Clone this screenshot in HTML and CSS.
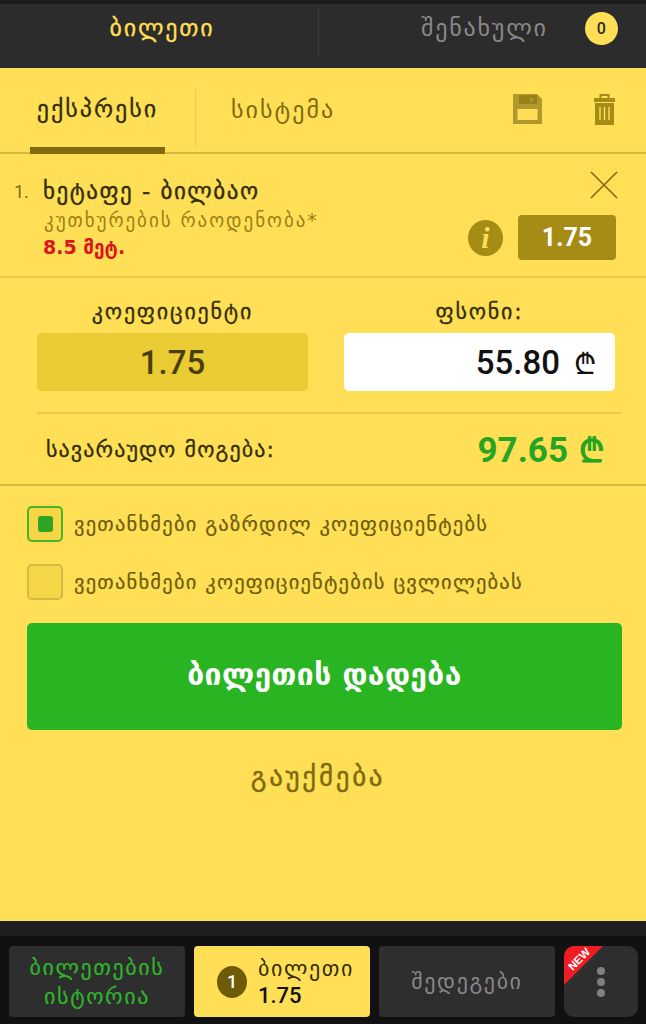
FILE: index.html
```html
<!DOCTYPE html>
<html lang="ka">
<head>
    <meta charset="UTF-8">
    <meta name="viewport" content="width=device-width, initial-scale=1.0">
    <title>ბილეთი</title>
    <link rel="stylesheet" href="styles.css">
</head>
<body>
    <div class="page">
        <!-- top tabs -->
        <header class="top-bar">
            <div class="top-tab active">ბილეთი</div>
            <div class="top-tab saved">
                <span>შენახული</span>
                <span class="saved-count">0</span>
            </div>
        </header>

        <main class="slip">
            <div class="type-row">
                <div class="type-tab active">ექსპრესი</div>
                <div class="type-tab second">სისტემა</div>
                <div class="type-icons">
                    <svg width="29" height="30" viewBox="0 0 29 30">
                        <path fill-rule="evenodd" d="M0 0H24L29 5V30H0ZM4.5 15V26H24.5V15Z" fill="#b1982f"/>
                        <path fill-rule="evenodd" d="M6 1H24V10H6ZM17 4V7H20V4Z" fill="#9c8214"/>
                    </svg>
                    <svg width="21" height="31" viewBox="0 0 21 31">
                        <path d="M6.5 4V1H14.5V4" fill="none" stroke="#a68b15" stroke-width="2"/>
                        <path d="M0 4H21V8H0Z" fill="#a68b15"/>
                        <path d="M1 9H20V31H1Z" fill="#a68b15"/>
                        <path d="M6 13V26M10.5 13V26M15 13V26" stroke="#ffdf55" stroke-width="1.4"/>
                    </svg>
                </div>
            </div>

            <div class="bet">
                <div class="bet-info">
                    <div class="bet-title"><span class="bet-num">1.</span><span>ხეტაფე - ბილბაო</span></div>
                    <div class="bet-market">კუთხურების რაოდენობა*</div>
                    <div class="bet-pick">8.5 მეტ.</div>
                </div>
                <div class="bet-side">
                    <svg class="close-x" width="30" height="30" viewBox="0 0 30 30">
                        <path d="M2 2L28 28M28 2L2 28" stroke="#80690f" stroke-width="1.6" fill="none"/>
                    </svg>
                    <div class="bet-odds-row">
                        <span class="info-icon">i</span>
                        <span class="odds-box">1.75</span>
                    </div>
                </div>
            </div>

            <div class="stake">
                <div class="stake-cols">
                    <div class="stake-col">
                        <div class="stake-label">კოეფიციენტი</div>
                        <div class="field field-odds">1.75</div>
                    </div>
                    <div class="stake-col">
                        <div class="stake-label">ფსონი:</div>
                        <div class="field field-amount">55.80<span class="lari">₾</span></div>
                    </div>
                </div>
                <div class="win-row">
                    <span class="win-label">სავარაუდო მოგება:</span>
                    <span class="win-value">97.65<span class="win-lari">₾</span></span>
                </div>
            </div>

            <div class="actions">
                <div class="check-row">
                    <span class="check checked"><span class="check-dot"></span></span>
                    <span>ვეთანხმები გაზრდილ კოეფიციენტებს</span>
                </div>
                <div class="check-row">
                    <span class="check"></span>
                    <span>ვეთანხმები კოეფიციენტების ცვლილებას</span>
                </div>
                <button class="place-btn">ბილეთის დადება</button>
                <div class="cancel">გაუქმება</div>
            </div>
        </main>

        <!-- bottom menu -->
        <footer class="bottom">
            <div class="bottom-strip"></div>
            <nav class="bottom-nav">
                <div class="nav-btn history">ბილეთების<br>ისტორია</div>
                <div class="nav-btn ticket">
                    <span class="ticket-count">1</span>
                    <span class="ticket-text">ბილეთი<br><b>1.75</b></span>
                </div>
                <div class="nav-btn results">შედეგები</div>
                <div class="nav-btn more">
                    <span class="new-flag"><span>NEW</span></span>
                    <span class="dots"><i></i><i></i><i></i></span>
                </div>
            </nav>
        </footer>
    </div>
</body>
</html>
```

FILE: styles.css
```css
* {
    box-sizing: border-box;
}

html, body {
    margin: 0;
    padding: 0;
}

body {
    font-family: 'DejaVu Sans', sans-serif;
    background-color: #ffdf55;
}

.page {
    display: flex;
    flex-direction: column;
    width: 646px;
    height: 1024px;
    overflow: hidden;
}

/* top tabs */
.top-bar {
    display: flex;
    height: 68px;
    flex-shrink: 0;
    background-color: #2c2c2c;
    border-top: 4px solid #1b1b1b;
}

.top-tab {
    flex: 1;
    display: flex;
    align-items: center;
    justify-content: center;
    padding-bottom: 16px;
    font-size: 24px;
    letter-spacing: 1.8px;
    color: #88888a;
}

.top-tab.active {
    flex: 0 0 319px;
    padding-left: 5px;
    color: #ffdf55;
    position: relative;
    -webkit-text-stroke: 0.3px #ffdf55;
}

.top-tab.active::after {
    content: "";
    position: absolute;
    right: 0;
    top: 4px;
    bottom: 12px;
    width: 1px;
    background-color: #3d3d3d;
}

.top-tab.saved {
    justify-content: flex-start;
    padding-left: 102px;
}

.saved-count {
    display: flex;
    align-items: center;
    justify-content: center;
    width: 33px;
    height: 33px;
    margin-left: 37px;
    border-radius: 50%;
    background-color: #ffdf55;
    color: #2c2c2c;
    font-family: 'Roboto', sans-serif;
    font-size: 16px;
    font-weight: 500;
    letter-spacing: 0;
}

/* slip */
.slip {
    flex: 1;
    display: flex;
    flex-direction: column;
    color: #3b3208;
}

.type-row {
    display: flex;
    height: 86px;
    flex-shrink: 0;
    padding-left: 30px;
    border-bottom: 2px solid #d4b945;
}

.type-tab {
    display: flex;
    align-items: center;
    height: 86px;
    padding-bottom: 2px;
    font-size: 24px;
    letter-spacing: 2px;
    color: #80690f;
}

.type-tab.active {
    width: 135px;
    justify-content: center;
    white-space: nowrap;
    color: #352d0a;
    border-bottom: 7px solid #80690f;
    padding-top: 5px;
    -webkit-text-stroke: 0.3px #352d0a;
}

.type-tab.second {
    margin-left: 30px;
    padding-left: 36px;
    background: linear-gradient(#e9cb4a, #e9cb4a) no-repeat left 22px / 1px 56px;
}

.type-icons {
    display: flex;
    align-items: center;
    gap: 52px;
    margin-left: auto;
    padding: 0 31px 2px 0;
}

.bet {
    display: flex;
    justify-content: space-between;
    height: 124px;
    flex-shrink: 0;
    padding: 22px 30px 0 14px;
    border-bottom: 2px solid #e9cb4a;
}

.bet-title {
    display: flex;
    align-items: center;
    height: 30px;
    font-size: 23px;
    letter-spacing: 1.5px;
    color: #352d0a;
    -webkit-text-stroke: 0.4px #352d0a;
}

.bet-num {
    width: 29px;
    font-family: 'Roboto', sans-serif;
    font-size: 18px;
    letter-spacing: 0;
    color: #80690f;
    -webkit-text-stroke: 0;
}

.bet-market {
    margin: 3px 0 0 30px;
    font-size: 19px;
    letter-spacing: 1.95px;
    color: #9a8218;
}

.bet-pick {
    margin: 5px 0 0 29px;
    font-size: 19px;
    font-weight: bold;
    color: #d9161d;
}

.bet-side {
    display: flex;
    flex-direction: column;
    align-items: flex-end;
}

.close-x {
    margin: -6px -3px 0 0;
}

.bet-odds-row {
    display: flex;
    align-items: center;
    gap: 15px;
    margin-top: 15px;
}

.info-icon {
    display: flex;
    align-items: center;
    justify-content: center;
    width: 35px;
    height: 36px;
    border-radius: 50%;
    background-color: #a68b15;
    color: #ffdf55;
    font-family: 'Liberation Serif', serif;
    font-size: 30px;
    font-weight: bold;
    font-style: italic;
}

.odds-box {
    display: flex;
    align-items: center;
    justify-content: center;
    width: 98px;
    height: 45px;
    border-radius: 4px;
    background-color: #a68b15;
    color: #ffffff;
    font-family: 'Roboto', sans-serif;
    font-size: 25px;
    font-weight: 700;
}

.stake {
    flex-shrink: 0;
    height: 208px;
    padding: 0 25px 0 37px;
    border-bottom: 2px solid #d4b945;
}

.stake-cols {
    display: flex;
    gap: 36px;
    height: 136px;
    padding-top: 21px;
    border-bottom: 2px solid #e9cb4a;
}

.stake-col {
    width: 271px;
}

.stake-label {
    height: 34px;
    text-align: center;
    font-size: 22px;
    letter-spacing: 1.8px;
    white-space: nowrap;
    color: #352d0a;
    -webkit-text-stroke: 0.3px #352d0a;
}

.field {
    display: flex;
    align-items: center;
    height: 58px;
    border-radius: 5px;
    font-family: 'Roboto', sans-serif;
    font-size: 33px;
    font-weight: 500;
}

.field-odds {
    justify-content: center;
    background-color: #e9cb34;
    color: #4a3f0c;
}

.field-amount {
    justify-content: flex-end;
    padding-right: 19px;
    background-color: #ffffff;
    color: #111111;
}

.lari {
    margin-left: 14px;
    font-family: 'DejaVu Sans', sans-serif;
    font-size: 29px;
}

.win-row {
    display: flex;
    align-items: center;
    justify-content: space-between;
    height: 70px;
    padding: 0 17px 0 9px;
}

.win-label {
    font-size: 22px;
    letter-spacing: 1.1px;
    color: #352d0a;
    -webkit-text-stroke: 0.3px #352d0a;
}

.win-value {
    font-family: 'Roboto', sans-serif;
    font-size: 35px;
    font-weight: 700;
    color: #27a422;
}

.win-lari {
    margin-left: 11px;
    font-family: 'DejaVu Sans', sans-serif;
    font-size: 33px;
}

/* checkboxes and buttons */
.actions {
    flex: 1;
    display: flex;
    flex-direction: column;
    padding: 20px 24px 0 27px;
}

.check-row {
    display: flex;
    align-items: center;
    gap: 11px;
    height: 36px;
    margin-bottom: 22px;
    font-size: 20.5px;
    letter-spacing: 1.2px;
    white-space: nowrap;
    color: #6f5c0d;
    -webkit-text-stroke: 0.2px #6f5c0d;
}

.check {
    display: flex;
    align-items: center;
    justify-content: center;
    width: 36px;
    height: 36px;
    flex-shrink: 0;
    border: 2px solid #d4b945;
    border-radius: 5px;
    background-color: #f5d647;
}

.check.checked {
    border-color: #45b52a;
}

.check-dot {
    width: 15px;
    height: 16px;
    border-radius: 3px;
    background-color: #2fa524;
}

.place-btn {
    height: 107px;
    margin-top: 1px;
    padding-bottom: 5px;
    border: none;
    border-radius: 5px;
    background-color: #29b522;
    color: #ffffff;
    font-family: inherit;
    font-size: 30px;
    font-weight: bold;
    letter-spacing: 0.4px;
}

.cancel {
    margin-top: 31px;
    padding-right: 13px;
    text-align: center;
    font-size: 27px;
    letter-spacing: 2.7px;
    color: #80690f;
    -webkit-text-stroke: 0.4px #80690f;
}

/* bottom menu */
.bottom {
    flex-shrink: 0;
    height: 103px;
    background-color: #111111;
}

.bottom-strip {
    height: 15px;
    background-color: #1e1e1e;
}

.bottom-nav {
    display: grid;
    grid-template-columns: 176px 176px 176px 74px;
    gap: 9px;
    height: 71px;
    margin: 10px 0 0 9px;
}

.nav-btn {
    display: flex;
    align-items: center;
    justify-content: center;
    border-radius: 4px;
    background-color: #2e2e2e;
    text-align: center;
    font-size: 22px;
    letter-spacing: 1.6px;
    line-height: 29px;
}

.history {
    color: #2fb52a;
    -webkit-text-stroke: 0.2px #2fb52a;
}

.results {
    color: #88888a;
}

.ticket {
    justify-content: flex-start;
    gap: 11px;
    padding-left: 23px;
    background-color: #ffdf55;
    color: #352d0a;
    text-align: left;
}

.ticket-text {
    line-height: 27px;
}

.ticket-text b {
    font-family: 'Roboto', sans-serif;
    font-size: 22px;
    font-weight: 500;
    letter-spacing: 0;
    color: #111111;
}

.ticket-count {
    display: flex;
    align-items: center;
    justify-content: center;
    width: 30px;
    height: 32px;
    border-radius: 50%;
    background-color: #6e5b08;
    color: #ffffff;
    font-family: 'Roboto', sans-serif;
    font-size: 18px;
    font-weight: 500;
    letter-spacing: 0;
}

.more {
    position: relative;
    overflow: hidden;
    border-radius: 10px;
}

.new-flag {
    position: absolute;
    left: 0;
    top: 0;
    width: 39px;
    height: 39px;
    background-color: #ee1c25;
    clip-path: polygon(0 0, 100% 0, 0 100%);
}

.new-flag span {
    position: absolute;
    left: -1px;
    top: 7px;
    width: 32px;
    transform: rotate(-45deg);
    color: #ffffff;
    font-family: 'Liberation Sans', sans-serif;
    font-size: 11px;
    font-weight: bold;
    letter-spacing: 0;
    line-height: 12px;
}

.dots {
    display: flex;
    flex-direction: column;
    gap: 3px;
}

.dots i {
    width: 8px;
    height: 8px;
    border-radius: 50%;
    background-color: #808080;
}
```
